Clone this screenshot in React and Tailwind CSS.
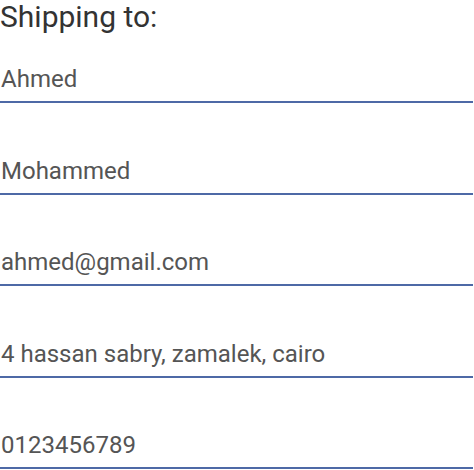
import React from "react";

const fields = [
  "Ahmed",
  "Mohammed",
  "ahmed@gmail.com",
  "4 hassan sabry, zamalek, cairo",
  "0123456789",
];

export default function App() {
  return (
    <div className="w-[474px] h-[470px] bg-white overflow-hidden font-['Roboto',sans-serif]">
      <h2 className="text-[30px] leading-[33px] text-[#333]">Shipping to:</h2>
      <div className="flex flex-col gap-[45.5px] mt-[24px]">
        {fields.map((f, i) => (
          <input
            key={i}
            type="text"
            defaultValue={f}
            className="w-[473px] h-[46px] px-[1px] text-[24px] text-[#555] border-b-2 border-[#4d69a6] outline-none bg-transparent"
          />
        ))}
      </div>
    </div>
  );
}
